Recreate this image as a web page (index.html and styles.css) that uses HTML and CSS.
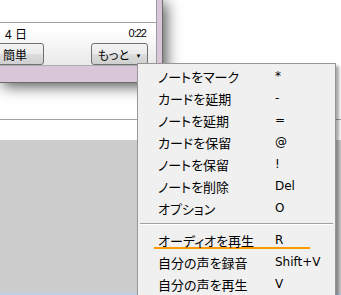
FILE: index.html
```html
<!DOCTYPE html>
<html lang="ja">
<head>
  <meta charset="UTF-8" />
  <title>もっと メニュー</title>
  <link rel="stylesheet" href="styles.css">
</head>
<body>
  <div class="screen">
    <div class="desk">
      <div class="window">
        <div class="win-body">
          <div class="win-top"></div>
          <div class="status">
            <span class="days">4 日</span>
            <span class="time">0:22</span>
          </div>
          <div class="buttons">
            <button class="btn btn-easy">簡単</button>
            <button class="btn btn-more">もっと <span class="caret">&#9660;</span></button>
          </div>
        </div>
      </div>
    </div>
    <div class="strip"></div>
    <div class="panel"></div>

    <!-- dropdown opened from the "もっと" button -->
    <ul class="menu">
      <li class="item"><span>ノートをマーク</span><span>*</span></li>
      <li class="item"><span>カードを延期</span><span>-</span></li>
      <li class="item"><span>ノートを延期</span><span>=</span></li>
      <li class="item"><span>カードを保留</span><span>@</span></li>
      <li class="item"><span>ノートを保留</span><span>!</span></li>
      <li class="item"><span>ノートを削除</span><span>Del</span></li>
      <li class="item"><span>オプション</span><span>O</span></li>
      <li class="separator"></li>
      <li class="item current"><span>オーディオを再生</span><span>R</span></li>
      <li class="item"><span>自分の声を録音</span><span>Shift+V</span></li>
      <li class="item"><span>自分の声を再生</span><span>V</span></li>
    </ul>
  </div>
</body>
</html>
```

FILE: styles.css
```css
body {
  margin: 0;
  padding: 0;
  background: #fff;
}

.screen {
  position: relative;
  width: 341px;
  height: 295px;
  overflow: hidden;
  background: #cccccc;
  font-family: 'Liberation Sans', 'Noto Sans CJK JP', sans-serif;
  font-size: 12px;
  color: #000;
}

.desk {
  height: 119px;
  background: #fff;
  border-bottom: 1px solid #a3a3a3;
}

.strip {
  height: 20px;
  background: #fff;
}

.panel {
  height: 153px;
  background: #cccccc;
  border-bottom: 2px solid #bcd0e6;
}

/* the small review window */
.window {
  width: 157px;
  padding: 0 5px 16px 0;
  background: #d9c7d9;
  border-right: 1px solid #6e6e6e;
  border-bottom: 1px solid #6e6e6e;
  box-shadow: 3px 3px 14px rgba(0, 0, 0, 0.7);
}

.win-body {
  width: 156px;
  height: 65px;
  border-right: 1px solid #9c9c9c;
  border-bottom: 1px solid #b0b0b0;
  background: linear-gradient(#fff 45%, #e9e9e9);
}

.win-top {
  height: 22px;
  background: #fff;
  border-bottom: 1px solid #a0a0a0;
}

.status {
  display: flex;
  justify-content: space-between;
  align-items: center;
  height: 20px;
  padding: 0 10px 0 5px;
}

.time {
  font-size: 11px;
  letter-spacing: -1px;
}

.buttons {
  display: flex;
  justify-content: space-between;
  padding-right: 8px;
}

.btn {
  height: 22px;
  padding: 0;
  font-family: inherit;
  font-size: 12px;
  color: #000;
  border: 1px solid #707070;
  border-radius: 3px;
  background: linear-gradient(#f3f3f3 0%, #ebebeb 50%, #dddddd 51%, #cfcfcf 100%);
}

.btn-easy {
  width: 58px;
  margin-left: -14px;
}

.btn-more {
  width: 57px;
  font-feature-settings: "palt";
}

.caret {
  font-size: 6px;
  vertical-align: 2px;
  margin-left: 3px;
}

/* dropdown menu */
.menu {
  position: absolute;
  left: 137px;
  top: 63px;
  width: 197px;
  margin: 0;
  padding: 1px 0 0;
  list-style: none;
  background: #f0f0f0;
  border: 1px solid #979797;
  box-shadow: 3px 3px 3px rgba(0, 0, 0, 0.35);
  font-family: 'DejaVu Sans', 'Noto Sans CJK JP', sans-serif;
  font-size: 12px;
}

.item {
  display: grid;
  grid-template-columns: 117px 1fr;
  align-items: center;
  height: 22px;
  padding-left: 20px;
}

.item span:first-child {
  font-family: 'Noto Sans CJK JP', sans-serif;
  font-size: 13px;
  font-feature-settings: "palt";
}

.current {
  background: linear-gradient(#ff9a00, #ff9a00) no-repeat 16px 18px / 156px 2px;
}

.separator {
  margin: 4px 2px 4px 2px;
  border-top: 1px solid #a0a0a0;
  border-bottom: 1px solid #fff;
}
```
